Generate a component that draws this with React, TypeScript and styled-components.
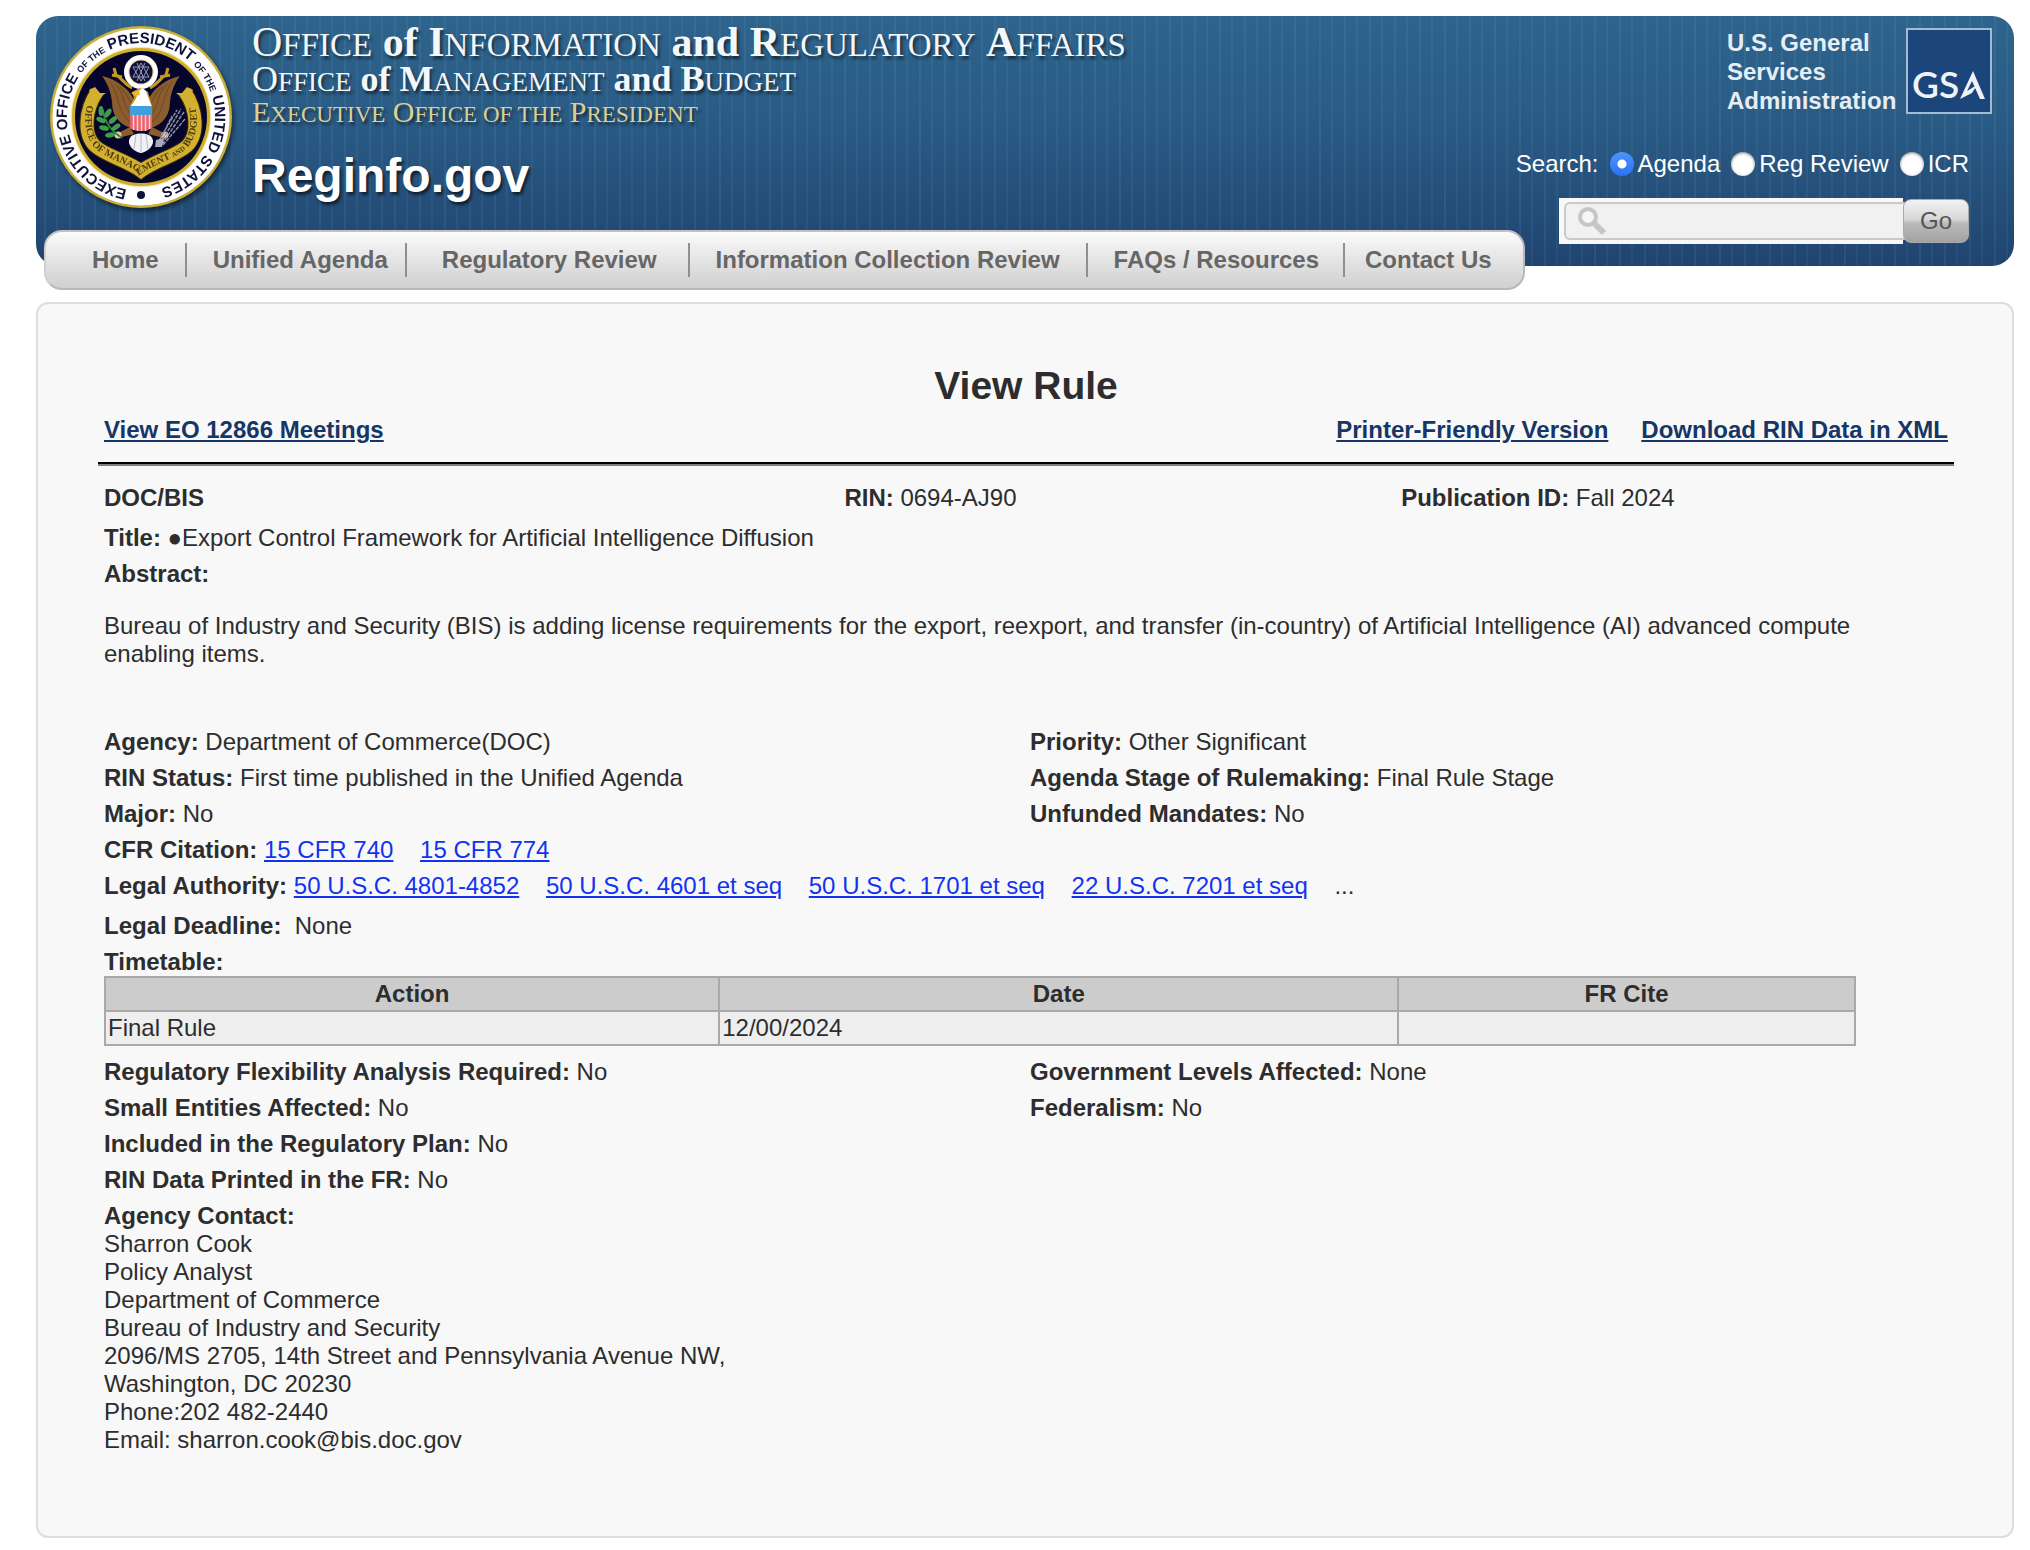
import React, { useState } from "react";
import styled, { createGlobalStyle } from "styled-components";

const sans = '"Liberation Sans", Arial, Helvetica, sans-serif';
const serif = '"Liberation Serif", "Times New Roman", serif';

const GlobalStyle = createGlobalStyle`
  *, *::before, *::after { box-sizing: border-box; }
  body {
    margin: 0;
    background: #fff;
    color: #2d2d2d;
    font-family: ${sans};
    font-size: 24px;
    line-height: 28px;
  }
`;

const Page = styled.div`
  padding: 16px 16px 12px 36px;
`;

/* ---------- header ---------- */

const Banner = styled.header`
  display: flex;
  align-items: flex-start;
  padding-left: 14px;
  border-radius: 22px;
  color: #fff;
  background:
    repeating-linear-gradient(
      90deg,
      rgba(255, 255, 255, 0) 0 8px,
      rgba(140, 200, 230, 0.09) 8px 10px,
      rgba(255, 255, 255, 0) 10px 20px,
      rgba(140, 200, 230, 0.07) 20px 22px,
      rgba(255, 255, 255, 0) 22px 25px
    ),
    linear-gradient(#2f648c, #295a84 45%, #20446f);
`;

const Seal = styled.svg`
  flex: none;
  width: 182px;
  height: 182px;
  margin-top: 10px;
  overflow: visible;
  filter: drop-shadow(2px 3px 2px rgba(0, 0, 0, 0.5));
`;

const Titles = styled.div`
  flex: 1;
  padding: 6px 0 0 20px;
  white-space: nowrap;
`;

const CapsLine = styled.div<{ $size: number; $line: number; $gold?: boolean }>`
  font-family: ${serif};
  font-size: ${(p) => p.$size}px;
  line-height: ${(p) => p.$line}px;
  color: ${(p) => (p.$gold ? "#ddd092" : "#f4f7fa")};
  text-shadow: 2px 3px 3px rgba(0, 0, 0, 0.55);
`;

const SmallCaps = styled.span<{ $size: number }>`
  font-size: ${(p) => p.$size}px;
  line-height: 0;
`;

const SiteName = styled.div`
  margin-top: 20px;
  font-size: 48px;
  line-height: 56px;
  font-weight: bold;
  text-shadow: 2px 3px 3px rgba(0, 0, 0, 0.6);
`;

const BannerSide = styled.div`
  display: flex;
  flex-direction: column;
  align-items: flex-end;
  padding: 12px 22px 22px 0;
`;

const Gsa = styled.div`
  display: flex;
  gap: 10px;
  height: 86px;
  font-weight: bold;
  line-height: 29px;
  color: #e6eef4;
`;

const GsaName = styled.div`
  width: 169px;
`;

const GsaLogo = styled.svg`
  flex: none;
  width: 86px;
  height: 86px;
`;

const Scope = styled.fieldset`
  display: flex;
  align-items: center;
  gap: 11px;
  margin: 36px 23px 0 0;
  padding: 0;
  border: 0;
`;

const RadioLabel = styled.label`
  display: flex;
  align-items: center;
  gap: 4px;
`;

const Radio = styled.input`
  appearance: none;
  width: 24px;
  height: 24px;
  margin: 0;
  border-radius: 50%;
  background: #fff;
  box-shadow: inset 0 1px 3px rgba(0, 0, 0, 0.5);
  &:checked {
    background: radial-gradient(circle, #fff 0 4px, transparent 5px),
      linear-gradient(#4c95fb, #2a72f5);
    box-shadow: none;
  }
`;

const SearchForm = styled.form`
  display: flex;
  align-items: center;
  margin: 20px 23px 0 0;
`;

const SearchBox = styled.label`
  display: flex;
  width: 344px;
  height: 46px;
  padding: 4px 0 4px 5px;
  background: #f8f8f8;
`;

const SearchField = styled.span`
  display: flex;
  flex: 1;
  align-items: center;
  padding-left: 11px;
  border: 2px solid #c9c9c9;
  border-right: 0;
  border-radius: 6px 0 0 6px;
  background: #f1f1f1;
`;

const SearchInput = styled.input`
  flex: 1;
  min-width: 0;
  height: 100%;
  padding: 0 8px;
  border: 0;
  outline: 0;
  background: none;
  font: inherit;
`;

const GoButton = styled.button`
  width: 66px;
  height: 44px;
  padding: 0;
  border: 1px solid #aaa;
  border-radius: 8px;
  background: linear-gradient(#f2f2f2, #d8d8d8 45%, #bbb 55%, #a2a2a2);
  color: #555;
  font: inherit;
`;

const Nav = styled.nav`
  position: relative;
  display: flex;
  align-items: center;
  width: fit-content;
  height: 60px;
  margin: -36px 0 12px 8px;
  border: 2px solid #b8b8b8;
  border-top-color: #c4c0c2;
  border-left-color: #d0d0d0;
  border-radius: 18px;
  background: linear-gradient(#fbfbfb, #e4e4e4 50%, #d0d0d0);
`;

const NavItem = styled.a<{ $before: number; $after: number }>`
  padding: 3px ${(p) => p.$after}px 3px ${(p) => p.$before}px;
  border-right: 2px solid #8f8f8f;
  color: #666;
  font-weight: bold;
  text-decoration: none;
  white-space: nowrap;
  &:last-child {
    border-right: 0;
  }
`;

/* ---------- rule ---------- */

const Panel = styled.main`
  padding: 60px 58px 82px 60px;
  border: 2px solid #dedede;
  border-radius: 12px;
  background: #f8f8f8;
`;

const PageTitle = styled.h1`
  margin: 0 0 8px;
  font-size: 39px;
  line-height: 44px;
  text-align: center;
`;

const Actions = styled.div`
  display: flex;
  gap: 33px;
  padding: 0 6px;
`;

const ActionLink = styled.a<{ $push?: boolean }>`
  margin-right: ${(p) => (p.$push ? "auto" : "0")};
  color: #163665;
  font-weight: bold;
`;

const Divider = styled.hr`
  margin: 18px 0;
  border: 0;
  border-top: 2px solid #000;
  border-bottom: 2px solid #808080;
`;

const Row = styled.div<{ $cols?: string; $gap?: number }>`
  display: grid;
  grid-template-columns: ${(p) => p.$cols || "1fr"};
  margin-top: ${(p) => (p.$gap === undefined ? 8 : p.$gap)}px;
`;

const Cell = styled.div`
  padding-left: 4px;
  &:first-child {
    padding-left: 6px;
  }
`;

const Inset = styled.div`
  width: 1752px;
  max-width: calc(100% - 12px);
  margin-left: 6px;
`;

const Abstract = styled.p`
  margin: 24px 0 60px;
`;

const Cite = styled.a`
  margin-right: 20px;
  color: #1133f0;
`;

const Timetable = styled.table`
  width: 100%;
  margin-bottom: 12px;
  border-collapse: collapse;
  table-layout: fixed;
  background: #eee;
`;

const HeadCell = styled.th<{ $width: string }>`
  width: ${(p) => p.$width};
  padding: 2px;
  border: 2px solid #a9a9a9;
  background: #ccc;
`;

const DataCell = styled.td`
  padding: 2px;
  border: 2px solid #a9a9a9;
`;

const Contact = styled.address`
  padding-left: 6px;
  font-style: normal;
`;

const navItems = [
  { label: "Home", before: 46, after: 26 },
  { label: "Unified Agenda", before: 26, after: 17 },
  { label: "Regulatory Review", before: 35, after: 31 },
  { label: "Information Collection Review", before: 26, after: 26 },
  { label: "FAQs / Resources", before: 26, after: 24 },
  { label: "Contact Us", before: 20, after: 31 },
];

const authorities = [
  "50 U.S.C. 4801-4852",
  "50 U.S.C. 4601 et seq",
  "50 U.S.C. 1701 et seq",
  "22 U.S.C. 7201 et seq",
];

const contactLines = [
  "Sharron Cook",
  "Policy Analyst",
  "Department of Commerce",
  "Bureau of Industry and Security",
  "2096/MS 2705, 14th Street and Pennsylvania Avenue NW,",
  "Washington, DC 20230",
  "Phone:202 482-2440",
  "Email: sharron.cook@bis.doc.gov",
];

function Caps({ text, size, small, line, gold }: { text: string; size: number; small: number; line: number; gold?: boolean }) {
  return (
    <CapsLine $size={size} $line={line} $gold={gold}>
      {text.split(" ").map((word, i) => {
        const lead = i ? " " : "";
        if (word === word.toLowerCase())
          return gold ? (
            <SmallCaps key={i} $size={small}>{lead + word.toUpperCase()}</SmallCaps>
          ) : (
            <b key={i}>{lead + word}</b>
          );
        return (
          <React.Fragment key={i}>
            {lead}
            {gold || word[0] === "O" ? word[0] : <b>{word[0]}</b>}
            <SmallCaps $size={small}>{word.slice(1).toUpperCase()}</SmallCaps>
          </React.Fragment>
        );
      })}
    </CapsLine>
  );
}

function PresidentialSeal() {
  const ribbon = "M47 66 C35 84 33 108 45 120 C56 130 76 134 91 145 C106 134 126 130 137 120 C149 108 147 84 135 66";
  return (
    <Seal viewBox="0 0 182 182" role="img" aria-label="Seal of the Executive Office of the President">
      <defs>
        <path id="seal-ring" d="M91 165 A74 74 0 0 1 91 17 A74 74 0 0 1 91 165" />
        <path id="seal-ribbon" d="M37 79 C34 92 34 108 44 121 C56 133 76 137 91 148 C106 137 126 133 138 121 C148 108 148 92 145 79" />
      </defs>
      <circle cx="91" cy="91" r="91" fill="#c9ae3a" />
      <circle cx="91" cy="91" r="88.500" fill="#fff" />
      <circle cx="91" cy="91" r="70" fill="#efe3a2" />
      <circle cx="91" cy="91" r="69" fill="#cfae2c" />
      <circle cx="91" cy="91" r="66" fill="#06062c" />
      <text fill="#10103c" fontFamily='"Liberation Sans Narrow", "Liberation Sans", sans-serif' fontWeight="bold" fontSize="15">
        <textPath href="#seal-ring" startOffset="14">
          EXECUTIVE OFFICE <tspan fontSize="9">OF THE</tspan> PRESIDENT <tspan fontSize="9">OF THE</tspan> UNITED STATES
        </textPath>
      </text>
      <circle cx="91" cy="169" r="4" fill="#10103c" />

      <path d={ribbon} fill="none" stroke="#3a2f10" strokeWidth="15" />
      <path d={ribbon} fill="none" stroke="#d3b030" strokeWidth="13" />
      <path d="M39 64 L42 71 L34 78 L44 76 L52 70 L56 67 L50 67 L45 61Z M143 64 L140 71 L148 78 L138 76 L130 70 L126 67 L132 67 L137 61Z" fill="#d3b030" />
      <text fill="#4a3c10" fontFamily={serif} fontSize="10" fontWeight="bold">
        <textPath href="#seal-ribbon" startOffset="0">OFFICE OF MANAGEMENT <tspan fontSize="7">AND</tspan> BUDGET</textPath>
      </text>

      <g fill="none" stroke="#c79a1e" strokeWidth="3">
        <path d="M64 42 L66 49 C72 52 74 58 82 62 M62 49 L72 51" />
        <path d="M118 42 L116 49 C110 52 108 58 100 62 M120 49 L110 51" />
      </g>
      <path d="M52 50 C62 52 72 58 79 66 L86 76 L81 102 C68 98 62 88 62 76 C61 66 57 56 52 50Z" fill="#8a5c2e" />
      <path d="M130 50 C120 52 110 58 103 66 L96 76 L101 102 C114 98 120 88 120 76 C121 66 125 56 130 50Z" fill="#8a5c2e" />
      <g fill="none" stroke="#6f4822" strokeWidth="1">
        <path d="M60 56 C69 66 66 84 80 96 M65 58 C76 68 72 80 81 88 M70 61 C78 68 78 74 83 79" />
        <path d="M122 56 C113 66 116 84 102 96 M117 58 C106 68 110 80 101 88 M112 61 C104 68 104 74 99 79" />
      </g>
      <circle cx="91" cy="46" r="17" fill="#fff" />
      <circle cx="91" cy="46" r="12.500" fill="#e3cf8d" />
      <circle cx="91" cy="46" r="11.500" fill="#10103c" />
      <g fill="none" stroke="#9a9ab4" strokeWidth="1">
        <path d="M91 37 L99 51 L83 51Z M91 55 L83 41 L99 41Z M87 37 L95 55 M95 37 L87 55" />
      </g>
      <path d="M82 66 L90 62 L98 66 L102 80 L80 80 L84 72Z" fill="#c79a1e" />
      <path d="M88 66 C92 60 97 64 97 68 L102 81 L80 81 C84 76 87 72 88 66Z" fill="#fff" />
      <path d="M89 64 L81 67 L85 70 L90 69Z" fill="#e2b92e" />
      <path d="M80 101 L70 106 L64 108 L72 111 L84 108Z M102 101 L112 106 L118 108 L110 111 L98 108Z" fill="#8a5c2e" />
      <circle cx="68" cy="109" r="3.500" fill="#e8cba5" />
      <circle cx="115" cy="109" r="3.500" fill="#e8cba5" />
      <path d="M80 112 C82 106 100 106 102 112 C106 118 98 126 91 127 C84 126 76 118 80 112Z" fill="#f1f1f4" />
      <path d="M91 108 V126 M86 109 L84 123 M96 109 L98 123" stroke="#b6b6c4" strokeWidth="1" />
      <rect x="80" y="80" width="22" height="10" fill="#3f9fe0" />
      <path d="M80 89 H102 V102 C98 106 84 106 80 102Z" fill="#e8626c" />
      <path d="M83.500 89 V104 M87.500 89 V105 M91.500 89 V105 M95.500 89 V105 M99.500 89 V103" stroke="#fbd0d2" strokeWidth="1.500" />
      <path d="M53 84 C54 94 60 104 72 112" fill="none" stroke="#2f8a3e" strokeWidth="2" />
      <g fill="#3f9c4c">
        <ellipse cx="51" cy="85" rx="2.500" ry="5" />
        <ellipse cx="58" cy="87" rx="2.500" ry="5" transform="rotate(35 58 87)" />
        <ellipse cx="51" cy="94" rx="2.500" ry="5" transform="rotate(-65 51 94)" />
        <ellipse cx="63" cy="94" rx="2.500" ry="5" transform="rotate(50 63 94)" />
        <ellipse cx="54" cy="102" rx="2.500" ry="5" transform="rotate(-75 54 102)" />
        <ellipse cx="66" cy="101" rx="2.500" ry="5" transform="rotate(55 66 101)" />
        <ellipse cx="60" cy="109" rx="2.500" ry="5" transform="rotate(-100 60 109)" />
      </g>
      <g stroke="#8b8ea4" strokeWidth="1.500" fill="none">
        <path d="M110 118 L131 83 M112 118 L134 86 M108 116 L127 84 M113 119 L135 93 M110 114 L122 90" strokeDasharray="4 1" />
      </g>
      <path d="M106 114 L114 112 L112 121 L105 121Z" fill="#a9abba" />
    </Seal>
  );
}

function Field({ label, children }: { label: string; children?: React.ReactNode }) {
  return (
    <Cell>
      <b>{label}</b> {children}
    </Cell>
  );
}

export default function App() {
  const [scope, setScope] = useState("Agenda");
  return (
    <Page>
      <GlobalStyle />
      <Banner>
        <PresidentialSeal />
        <Titles>
          <Caps text="Office of Information and Regulatory Affairs" size={42} small={33} line={40} />
          <Caps text="Office of Management and Budget" size={36} small={27} line={34} />
          <Caps text="Executive Office of the President" size={30} small={23} line={32} gold />
          <SiteName>Reginfo.gov</SiteName>
        </Titles>
        <BannerSide>
          <Gsa>
            <GsaName>U.S. General Services Administration</GsaName>
            <GsaLogo viewBox="0 0 86 86" aria-hidden="true">
              <rect x="1" y="1" width="84" height="84" fill="#1c457b" stroke="#a3bccf" strokeWidth="2" />
              <text x="6" y="70" fill="#eef3f7" fontFamily="Lato, sans-serif" fontSize="37" fontWeight="600">GS</text>
              <path d="M67 43 L79 71 L74 71 L66 53 L61 63 L71 57 L66 65 L54 71Z" fill="#eef3f7" />
            </GsaLogo>
          </Gsa>
          <Scope>
            <span>Search:</span>
            {["Agenda", "Reg Review", "ICR"].map((name) => (
              <RadioLabel key={name}>
                <Radio type="radio" name="scope" checked={scope === name} onChange={() => setScope(name)} />
                {name}
              </RadioLabel>
            ))}
          </Scope>
          <SearchForm onSubmit={(e) => e.preventDefault()}>
            <SearchBox>
              <SearchField>
                <svg width="30" height="32" viewBox="0 0 30 32" aria-hidden="true">
                  <circle cx="11" cy="12" r="8" fill="#f6f6f6" stroke="#c6c6c6" strokeWidth="4" />
                  <path d="M17 18 L27 28" stroke="#c6c6c6" strokeWidth="6" />
                </svg>
                <SearchInput type="text" aria-label="Search" />
              </SearchField>
            </SearchBox>
            <GoButton type="submit">Go</GoButton>
          </SearchForm>
        </BannerSide>
      </Banner>
      <Nav>
        {navItems.map((item) => (
          <NavItem key={item.label} href="#" $before={item.before} $after={item.after}>
            {item.label}
          </NavItem>
        ))}
      </Nav>

      <Panel>
        <PageTitle>View Rule</PageTitle>
        <Actions>
          <ActionLink href="#" $push>View EO 12866 Meetings</ActionLink>
          <ActionLink href="#">Printer-Friendly Version</ActionLink>
          <ActionLink href="#">Download RIN Data in XML</ActionLink>
        </Actions>
        <Divider />
        <Row $cols="4fr 3fr 3fr" $gap={0}>
          <Field label="DOC/BIS" />
          <Field label="RIN:">0694-AJ90</Field>
          <Field label="Publication ID:">Fall 2024</Field>
        </Row>
        <Row $gap={12}>
          <Field label="Title:">●Export Control Framework for Artificial Intelligence Diffusion</Field>
        </Row>
        <Row>
          <Field label="Abstract:" />
        </Row>
        <Inset>
          <Abstract>
            Bureau of Industry and Security (BIS) is adding license requirements for the export, reexport, and
            transfer (in-country) of Artificial Intelligence (AI) advanced compute enabling items.
          </Abstract>
        </Inset>
        <Row $cols="1fr 1fr" $gap={0}>
          <Field label="Agency:">Department of Commerce(DOC)</Field>
          <Field label="Priority:">Other Significant</Field>
        </Row>
        <Row $cols="1fr 1fr">
          <Field label="RIN Status:">First time published in the Unified Agenda</Field>
          <Field label="Agenda Stage of Rulemaking:">Final Rule Stage</Field>
        </Row>
        <Row $cols="1fr 1fr">
          <Field label="Major:">No</Field>
          <Field label="Unfunded Mandates:">No</Field>
        </Row>
        <Row>
          <Field label="CFR Citation:">
            <Cite href="#">15 CFR 740</Cite> <Cite href="#">15 CFR 774</Cite>
          </Field>
        </Row>
        <Row>
          <Field label="Legal Authority:">
            {authorities.map((name) => (
              <React.Fragment key={name}>
                <Cite href="#">{name}</Cite>{" "}
              </React.Fragment>
            ))}
            ...
          </Field>
        </Row>
        <Row $gap={12}>
          <Field label="Legal Deadline:">&nbsp;None</Field>
        </Row>
        <Row>
          <Field label="Timetable:" />
        </Row>
        <Inset>
          <Timetable>
            <thead>
              <tr>
                <HeadCell $width="35.1%">Action</HeadCell>
                <HeadCell $width="38.8%">Date</HeadCell>
                <HeadCell $width="26.1%">FR Cite</HeadCell>
              </tr>
            </thead>
            <tbody>
              <tr>
                <DataCell>Final Rule</DataCell>
                <DataCell>12/00/2024</DataCell>
                <DataCell />
              </tr>
            </tbody>
          </Timetable>
        </Inset>
        <Row $cols="1fr 1fr" $gap={0}>
          <Field label="Regulatory Flexibility Analysis Required:">No</Field>
          <Field label="Government Levels Affected:">None</Field>
        </Row>
        <Row $cols="1fr 1fr">
          <Field label="Small Entities Affected:">No</Field>
          <Field label="Federalism:">No</Field>
        </Row>
        <Row>
          <Field label="Included in the Regulatory Plan:">No</Field>
        </Row>
        <Row>
          <Field label="RIN Data Printed in the FR:">No</Field>
        </Row>
        <Row>
          <Field label="Agency Contact:" />
        </Row>
        <Contact>
          {contactLines.map((line) => (
            <div key={line}>{line}</div>
          ))}
        </Contact>
      </Panel>
    </Page>
  );
}
